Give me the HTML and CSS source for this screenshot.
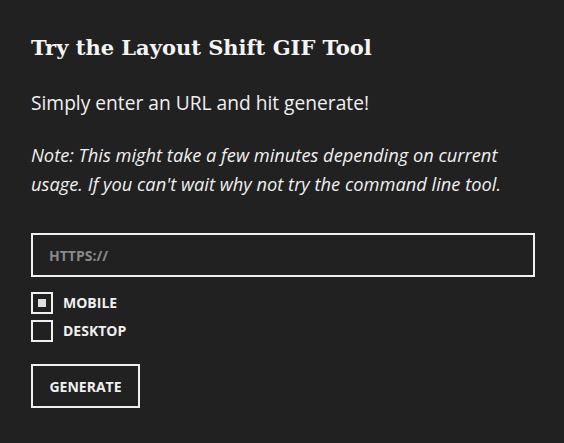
FILE: index.html
```html
<!DOCTYPE html>
<html lang="en">
<head>
<meta charset="utf-8">
<link rel="stylesheet" href="styles.css">
</head>
<body>
<main class="tool">
  <h1 class="title">Try the Layout Shift GIF Tool</h1>
  <p class="lead">Simply enter an URL and hit generate!</p>
  <p class="note">Note: This might take a few minutes depending on current usage. If you can't wait why not try the command line tool.</p>
  <form class="form">
    <input class="url" type="text" placeholder="HTTPS://">
    <div class="options">
      <label class="option"><span class="box checked"></span><span class="label">MOBILE</span></label>
      <label class="option"><span class="box"></span><span class="label">DESKTOP</span></label>
    </div>
    <button class="generate" type="button">GENERATE</button>
  </form>
</main>
</body>
</html>
```
FILE: styles.css
```css
html, body {
  margin: 0;
  padding: 0;
  background: #212121;
  color: #f0f0f0;
  font-family: "Open Sans", "Liberation Sans", sans-serif;
}
.tool {
  padding: 34px 30px 0 31px;
}
.title {
  margin: 0;
  font-family: "DejaVu Serif", serif;
  font-weight: bold;
  font-size: 21px;
  line-height: 28px;
  color: #f4f4f4;
}
.lead {
  margin: 26px 0 0;
  font-size: 19.2px;
  line-height: 30px;
}
.note {
  margin: 22px 0 0;
  font-style: italic;
  font-size: 18.3px;
  line-height: 29px;
}
.form {
  margin-top: 35px;
  display: flex;
  flex-direction: column;
}
.url {
  box-sizing: border-box;
  width: 504px;
  height: 44px;
  background: transparent;
  border: 2px solid #f0f0f0;
  padding: 0 16px;
  font-family: "Open Sans", sans-serif;
  font-weight: bold;
  font-size: 14px;
  color: #f0f0f0;
  outline: none;
}
.url::placeholder {
  color: #8a8a8a;
}
.options {
  margin-top: 15px;
  display: flex;
  flex-direction: column;
  gap: 6px;
}
.option {
  display: flex;
  align-items: center;
  gap: 10px;
}
.box {
  box-sizing: border-box;
  width: 22px;
  height: 22px;
  border: 2px solid #f0f0f0;
  display: flex;
  align-items: center;
  justify-content: center;
}
.box.checked::after {
  content: "";
  width: 8px;
  height: 8px;
  background: #e0e0e0;
}
.label {
  font-weight: bold;
  font-size: 14px;
  line-height: 22px;
}
.generate {
  margin-top: 22px;
  align-self: flex-start;
  box-sizing: border-box;
  width: 109px;
  height: 44px;
  background: transparent;
  border: 2px solid #f0f0f0;
  color: #f0f0f0;
  font-family: "Open Sans", sans-serif;
  font-weight: bold;
  font-size: 14px;
  padding: 0;
}
```
